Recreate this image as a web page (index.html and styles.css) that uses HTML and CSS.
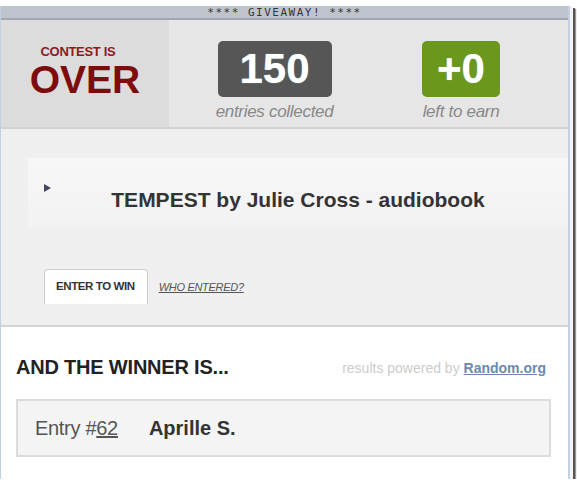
FILE: index.html
```html
<!DOCTYPE html>
<html lang="en">
<head>
    <meta charset="UTF-8">
    <title>Giveaway</title>
    <link rel="stylesheet" href="styles.css">
</head>
<body>

    <div class="shot">
        <div class="widget">
            <!-- Top strip -->
            <div class="giveaway-bar">**** GIVEAWAY! ****</div>

            <!-- Stats row -->
            <div class="stats">
                <div class="status">
                    <div class="status-small">CONTEST IS</div>
                    <div class="status-big">OVER</div>
                </div>
                <div class="stat stat-entries">
                    <div class="stat-num num-dark">150</div>
                    <div class="stat-label">entries collected</div>
                </div>
                <div class="stat stat-earn">
                    <div class="stat-num num-green">+0</div>
                    <div class="stat-label">left to earn</div>
                </div>
            </div>

            <!-- Prize -->
            <div class="prize">
                <div class="prize-box">
                    <span class="arrow"></span>
                    <h2 class="prize-title">TEMPEST by Julie Cross - audiobook</h2>
                </div>
                <div class="tabs">
                    <span class="tab active">ENTER TO WIN</span>
                    <a class="tab-link" href="#">WHO ENTERED?</a>
                </div>
            </div>

            <!-- Winner -->
            <div class="winner">
                <div class="winner-head">
                    <h3>AND THE WINNER IS...</h3>
                    <span class="powered">results powered by <a href="#">Random.org</a></span>
                </div>
                <div class="winner-box">
                    <span class="entry">Entry #<u>62</u></span>
                    <strong class="winner-name">Aprille S.</strong>
                </div>
            </div>
        </div>
    </div>

</body>
</html>
```

FILE: styles.css
```css
body {
    margin: 0;
    padding: 0;
    background: #fff;
    font-family: "Liberation Sans", Arial, sans-serif;
}
.shot {
    margin-top: 6px;
    width: 573px;
    height: 473px;
    background: #f4f4f4;
    box-shadow: 2px 2px 0 #555, 3px 3px 1px #999;
}
.widget {
    width: 567px;
    height: 473px;
    border-left: 1px solid #c3d0e4;
    border-right: 2px solid #c3d0e4;
    background: #fff;
    overflow: hidden;
}
.giveaway-bar {
    height: 12px;
    line-height: 13px;
    background: #bfc3cb;
    border-bottom: 2px solid #a3a7ae;
    text-align: center;
    font-family: "DejaVu Sans Mono", monospace;
    font-size: 11px;
    color: #333;
    letter-spacing: 1.5px;
}
.stats {
    display: flex;
    height: 107px;
    background: #e6e6e6;
    border-bottom: 2px solid #d2d2d2;
}
.status {
    width: 168px;
    background: #dcdcdc;
    text-align: center;
    color: #7e0c0c;
    font-weight: bold;
    padding-top: 24px;
    box-sizing: border-box;
}
.status-small {
    font-size: 13px;
    line-height: 16px;
    letter-spacing: -0.3px;
    margin-right: 14px;
    color: #8a1c1c;
}
.status-big {
    font-size: 39px;
    line-height: 38px;
    margin-top: 1px;
}
.stat {
    display: flex;
    flex-direction: column;
    align-items: center;
    padding-top: 21px;
}
.stat-entries {
    width: 211px;
}
.stat-earn {
    width: 162px;
}
.stat-num {
    height: 56px;
    line-height: 56px;
    border-radius: 5px;
    color: #fff;
    font-size: 42px;
    font-weight: bold;
    text-align: center;
    text-shadow: 0 0 1px #9cc;
}
.num-dark {
    width: 114px;
    background: #565656;
}
.num-green {
    width: 78px;
    background: #6a971c;
}
.stat-label {
    margin-top: 5px;
    font-size: 17px;
    font-style: italic;
    color: #888;
    letter-spacing: -0.3px;
}
.prize {
    height: 198px;
    background: repeating-linear-gradient(#f0f0f0 0, #f0f0f0 2px, #eeeeee 2px, #eeeeee 3px);
    border-bottom: 2px solid #d4d4d4;
    padding-top: 29px;
    box-sizing: border-box;
}
.prize-box {
    position: relative;
    margin-left: 27px;
    height: 70px;
    background: linear-gradient(#f7f7f7, #f2f2f2);
    display: flex;
    align-items: center;
    justify-content: center;
}
.arrow {
    position: absolute;
    left: 16px;
    top: 26px;
    width: 0;
    height: 0;
    border-top: 4px solid transparent;
    border-bottom: 4px solid transparent;
    border-left: 7px solid #44465e;
}
.prize-title {
    margin: 14px 0 0 0;
    font-size: 21px;
    color: #333;
}
.tabs {
    display: flex;
    align-items: center;
    margin: 41px 0 0 43px;
}
.tab {
    display: inline-block;
    padding: 0 12px 0 11px;
    height: 34px;
    line-height: 32px;
    background: #fff;
    border: 1px solid #ccc;
    border-bottom: none;
    border-radius: 4px 4px 0 0;
    font-size: 11.5px;
    font-weight: bold;
    color: #333;
    letter-spacing: -0.4px;
}
.tab-link {
    margin-left: 11px;
    font-size: 11px;
    font-style: italic;
    color: #555;
    letter-spacing: -0.3px;
}
.winner {
    padding: 29px 17px 0 15px;
}
.winner-head {
    display: flex;
    justify-content: space-between;
    align-items: center;
}
.winner-head h3 {
    margin: 0;
    font-size: 20px;
    color: #222;
    letter-spacing: -0.2px;
}
.powered {
    margin-right: 5px;
    font-size: 14px;
    color: #ccc;
}
.powered a {
    color: #6c88b2;
    font-weight: bold;
}
.winner-box {
    margin-top: 20px;
    height: 54px;
    display: flex;
    align-items: center;
    background: #f4f4f4;
    border: 2px solid #dcdcdc;
    padding-left: 17px;
    font-size: 20px;
}
.entry {
    color: #555;
    letter-spacing: -0.3px;
}
.winner-name {
    margin-left: 31px;
    color: #333;
}
```
